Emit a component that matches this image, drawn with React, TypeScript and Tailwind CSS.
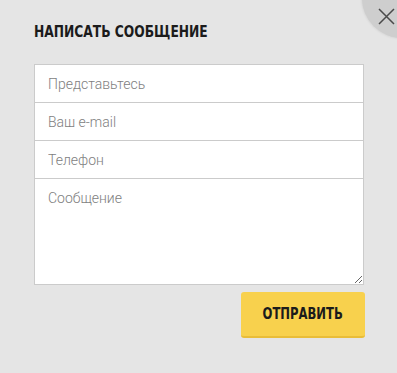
export default function App() {
  const cond = { fontFamily: '"DejaVu Sans Condensed", "DejaVu Sans", sans-serif' };

  return (
    <main className="relative w-full h-[373px] overflow-hidden bg-[#e5e5e5]">
      {/* close button */}
      <button className="absolute left-[362px] top-[-42px] w-[80px] h-[80px] rounded-full bg-[#cecece] shadow-[0_0_3px_rgba(0,0,0,0.12)]">
        <svg
          className="absolute left-[16px] top-[50px]"
          width="17"
          height="17"
          viewBox="0 0 17 17"
        >
          <path d="M1 1L16 16M16 1L1 16" stroke="#4a4a4a" strokeWidth="1.5" fill="none" />
        </svg>
      </button>

      <div className="flex flex-col pl-[34px] pt-[22px]">
        <h2
          className="origin-left scale-x-[0.91] text-[15px] font-bold leading-[20px] text-[#1b1b1b]"
          style={cond}
        >
          НАПИСАТЬ СООБЩЕНИЕ
        </h2>

        <form
          className="mt-[22px] flex flex-col w-[330px] border border-[#cbcbcb] bg-white"
          style={{ fontFamily: "Roboto, sans-serif" }}
        >
          <input
            className="h-[38px] px-[13px] border-b border-[#cbcbcb] text-[14px] font-light text-[#555] placeholder:text-[#7e7e7e] outline-none"
            placeholder="Представьтесь"
          />
          <input
            className="h-[38px] px-[13px] border-b border-[#cbcbcb] text-[14px] font-light text-[#555] placeholder:text-[#7e7e7e] outline-none"
            placeholder="Ваш e-mail"
          />
          <input
            className="h-[38px] px-[13px] border-b border-[#cbcbcb] text-[14px] font-light text-[#555] placeholder:text-[#7e7e7e] outline-none"
            placeholder="Телефон"
          />
          <textarea
            className="h-[105px] px-[13px] pt-[9px] text-[14px] font-light text-[#555] placeholder:text-[#7e7e7e] outline-none"
            placeholder="Сообщение"
          />
        </form>

        <div className="flex w-[331px] justify-end mt-[7px]">
          <button className="flex items-center justify-center w-[124px] h-[46px] rounded-[3px] bg-[#f8d14d] border-b-2 border-[#e9bd38]">
            <span
              className="scale-x-[0.86] text-[15px] font-bold text-[#1b1b1b]"
              style={cond}
            >
              ОТПРАВИТЬ
            </span>
          </button>
        </div>
      </div>
    </main>
  );
}
